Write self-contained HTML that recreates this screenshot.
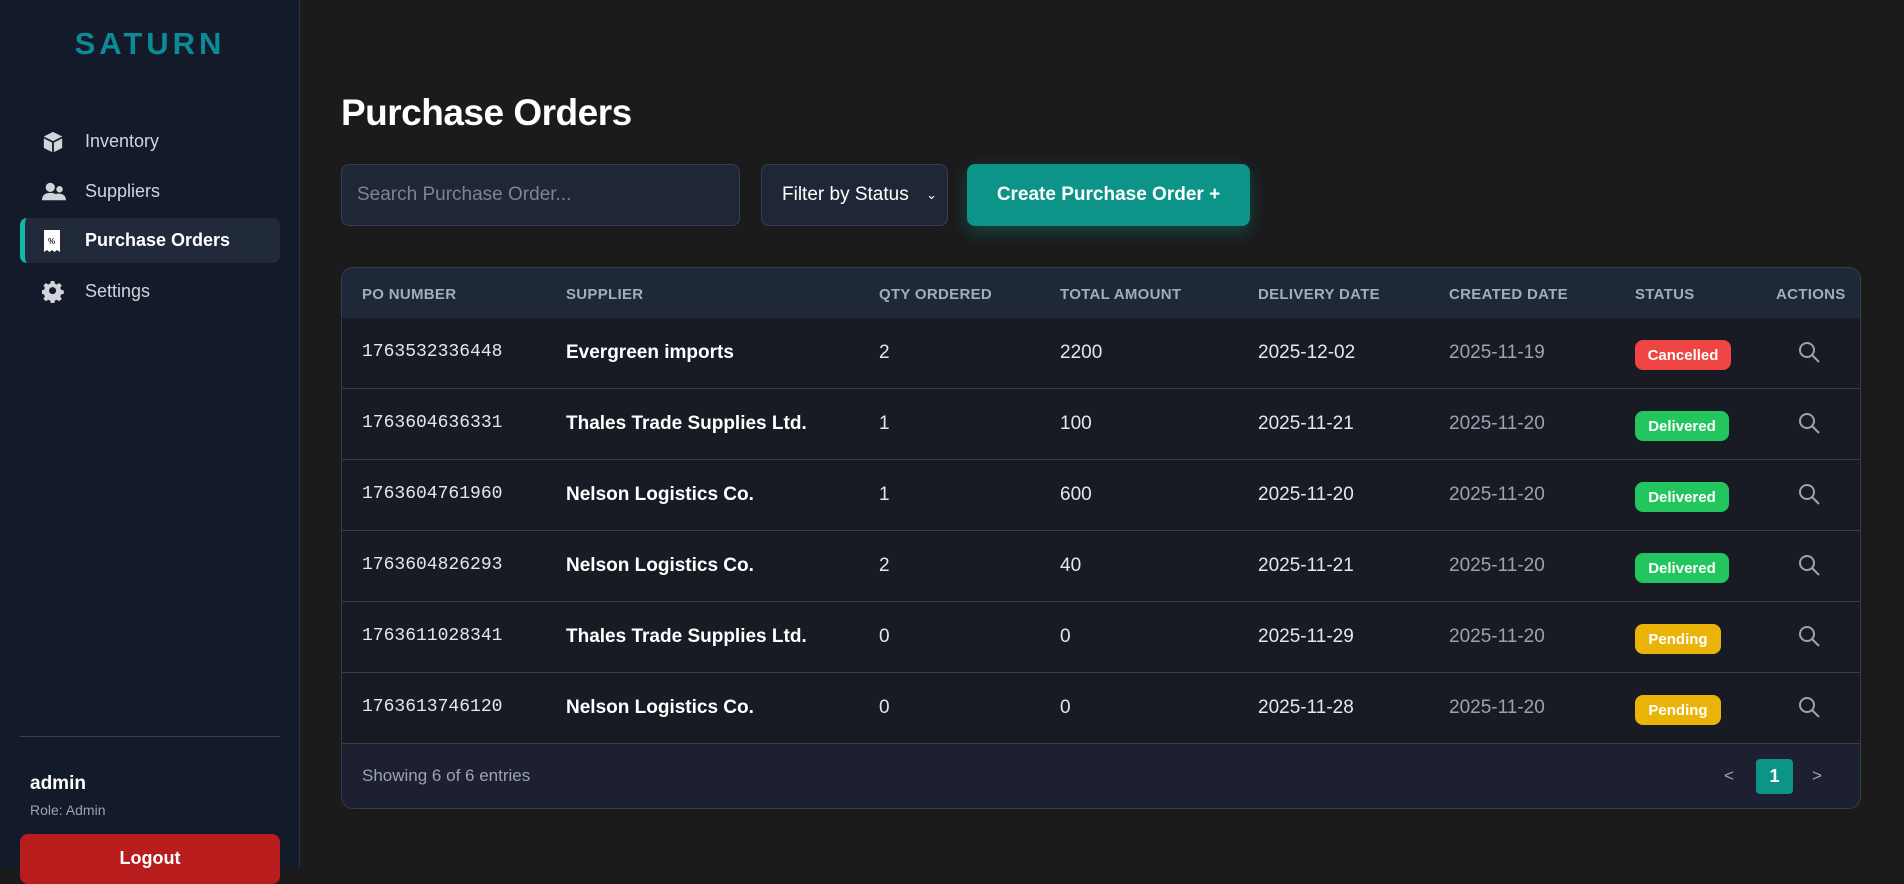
<!DOCTYPE html>
<html><head><meta charset="utf-8"><style>
*{box-sizing:border-box;margin:0;padding:0}
body{width:1904px;height:868px;background:#1b1b1c;font-family:"Liberation Sans",sans-serif;color:#e5e7eb;overflow:hidden;position:relative}
.sb{position:absolute;left:0;top:0;width:300px;height:868px;background:#131a29;border-right:1px solid #2b3242}
.logo{position:absolute;top:26px;left:0;width:300px;text-align:center;font-size:31px;font-weight:bold;color:#0e8a96;letter-spacing:4px}
.nav{position:absolute;left:20px;width:260px;height:45px;display:flex;align-items:center;font-size:18px;color:#d1d5db}
.nav svg{position:absolute;left:22px}
.nav span{position:absolute;left:65px}
.act{background:#212a3a;border-radius:7px;border-left:5px solid #14b8a6;color:#fff;font-weight:bold}
.act svg{left:17px}.act span{left:60px}
h1{position:absolute;left:341px;top:92px;font-size:37px;font-weight:900;color:#fff;letter-spacing:-0.5px}
.in{position:absolute;top:164px;height:62px;background:#1f2737;border:1px solid #363f52;border-radius:8px;font-size:19px;display:flex;align-items:center;white-space:nowrap}
.btn{position:absolute;left:967px;top:164px;width:283px;height:62px;background:#0d9488;border-radius:8px;color:#fff;font-weight:bold;font-size:19px;display:flex;align-items:center;justify-content:center;box-shadow:0 6px 16px rgba(13,148,136,.35)}
.tbl{position:absolute;left:341px;top:267px;width:1520px;height:542px;border:1px solid #343c4d;border-radius:12px;overflow:hidden;background:#181b24}
.hd{height:50px;background:#1f2838;position:relative}
.hd div{position:absolute;top:18px;font-size:15px;font-weight:bold;color:#a3acba;letter-spacing:.3px}
.row{height:71px;border-bottom:1px solid #343c4d;position:relative;font-size:19px}
.row div{position:absolute;top:24px}
.mono{font-family:"Liberation Mono",monospace;font-size:18px;color:#e5e7eb}
.b{font-weight:bold;color:#fff}
.g{color:#9ca3af}
.badge{top:22px!important;height:30px;border-radius:8px;color:#fff;font-size:15px;font-weight:bold;display:flex;align-items:center;justify-content:center}
.ft{height:66px;background:#1c2030;position:relative}
</style></head><body>
<div class="sb">
<div class="logo">SATURN</div>
<div class="nav" style="top:119px"><svg width="22" height="22" viewBox="0 0 24 24" fill="#d1d5db"><path d="M12 1 22 6 12 11 2 6z"/><path d="M2 8l9 4.5V23l-9-4.5z"/><path d="M22 8l-9 4.5V23l9-4.5z"/></svg><span>Inventory</span></div>
<div class="nav" style="top:169px"><svg width="24" height="22" viewBox="0 0 26 22" fill="#d1d5db"><circle cx="9" cy="6" r="5"/><path d="M0 20c0-6 4-8 9-8s9 2 9 8z"/><circle cx="19" cy="8" r="3.5"/><path d="M17 20c0-4-1-6-2-7 6-1 11 1 11 7z"/></svg><span>Suppliers</span></div>
<div class="nav act" style="top:218px"><svg width="20" height="24" viewBox="0 0 20 24"><path d="M2 1h16v22l-3-2-2.5 2-2.5-2-2.5 2-2.5-2-3 2z" fill="#fff"/><text x="6" y="15" font-size="8" fill="#212a3a" font-family="Liberation Sans">%</text></svg><span>Purchase Orders</span></div>
<div class="nav" style="top:269px"><svg width="22" height="22" viewBox="0 0 24 24" fill="#d1d5db"><path d="M10 1h4l.6 3 2.4 1 2.6-1.7 2.8 2.8L20.7 8.7l1 2.4 3 .6v4l-3 .6-1 2.4 1.7 2.6-2.8 2.8-2.6-1.7-2.4 1-.6 3h-4l-.6-3-2.4-1-2.6 1.7-2.8-2.8 1.7-2.6-1-2.4-3-.6v-4l3-.6 1-2.4L1.6 6.1 4.4 3.3 7 5l2.4-1zM12 8a4 4 0 100 8 4 4 0 000-8z" transform="translate(0 -1) scale(.96)"/></svg><span>Settings</span></div>
<div style="position:absolute;left:20px;top:736px;width:260px;height:1px;background:#394253"></div>
<div style="position:absolute;left:30px;top:773px;font-size:19px;font-weight:bold;color:#fff">admin</div>
<div style="position:absolute;left:30px;top:802px;font-size:14px;color:#9ca3af">Role: Admin</div>
<div style="position:absolute;left:20px;top:834px;width:260px;height:50px;background:#b91c1c;border-radius:8px;color:#fff;font-weight:bold;font-size:18px;text-align:center;padding-top:14px">Logout</div>
</div>
<h1>Purchase Orders</h1>
<div class="in" style="left:341px;width:399px;padding-left:15px;color:#7b8494">Search Purchase Order...</div>
<div class="in" style="left:761px;width:187px;padding-left:20px;color:#fff">Filter by Status <span style="position:absolute;right:10px;font-size:13px">&#8964;</span></div>
<div class="btn">Create Purchase Order +</div>
<div class="tbl">
<div class="hd"><div style="left:20px">PO NUMBER</div><div style="left:224px">SUPPLIER</div><div style="left:537px">QTY ORDERED</div><div style="left:718px">TOTAL AMOUNT</div><div style="left:916px">DELIVERY DATE</div><div style="left:1107px">CREATED DATE</div><div style="left:1293px">STATUS</div><div style="left:1434px">ACTIONS</div></div>
<div class="row"><div class="mono" style="left:20px">1763532336448</div><div class="b" style="left:224px">Evergreen imports</div><div style="left:537px">2</div><div style="left:718px">2200</div><div style="left:916px">2025-12-02</div><div class="g" style="left:1107px">2025-11-19</div><div class="badge" style="left:1293px;width:96px;background:#ef4444">Cancelled</div><div style="left:1455px;top:22px"><svg width="24" height="24" viewBox="0 0 24 24" fill="none" stroke="#9ca3af" stroke-width="2"><circle cx="10" cy="10" r="7"/><path d="M15 15l7 7"/></svg></div></div>
<div class="row"><div class="mono" style="left:20px">1763604636331</div><div class="b" style="left:224px">Thales Trade Supplies Ltd.</div><div style="left:537px">1</div><div style="left:718px">100</div><div style="left:916px">2025-11-21</div><div class="g" style="left:1107px">2025-11-20</div><div class="badge" style="left:1293px;width:94px;background:#22c55e">Delivered</div><div style="left:1455px;top:22px"><svg width="24" height="24" viewBox="0 0 24 24" fill="none" stroke="#9ca3af" stroke-width="2"><circle cx="10" cy="10" r="7"/><path d="M15 15l7 7"/></svg></div></div>
<div class="row"><div class="mono" style="left:20px">1763604761960</div><div class="b" style="left:224px">Nelson Logistics Co.</div><div style="left:537px">1</div><div style="left:718px">600</div><div style="left:916px">2025-11-20</div><div class="g" style="left:1107px">2025-11-20</div><div class="badge" style="left:1293px;width:94px;background:#22c55e">Delivered</div><div style="left:1455px;top:22px"><svg width="24" height="24" viewBox="0 0 24 24" fill="none" stroke="#9ca3af" stroke-width="2"><circle cx="10" cy="10" r="7"/><path d="M15 15l7 7"/></svg></div></div>
<div class="row"><div class="mono" style="left:20px">1763604826293</div><div class="b" style="left:224px">Nelson Logistics Co.</div><div style="left:537px">2</div><div style="left:718px">40</div><div style="left:916px">2025-11-21</div><div class="g" style="left:1107px">2025-11-20</div><div class="badge" style="left:1293px;width:94px;background:#22c55e">Delivered</div><div style="left:1455px;top:22px"><svg width="24" height="24" viewBox="0 0 24 24" fill="none" stroke="#9ca3af" stroke-width="2"><circle cx="10" cy="10" r="7"/><path d="M15 15l7 7"/></svg></div></div>
<div class="row"><div class="mono" style="left:20px">1763611028341</div><div class="b" style="left:224px">Thales Trade Supplies Ltd.</div><div style="left:537px">0</div><div style="left:718px">0</div><div style="left:916px">2025-11-29</div><div class="g" style="left:1107px">2025-11-20</div><div class="badge" style="left:1293px;width:86px;background:#eab308">Pending</div><div style="left:1455px;top:22px"><svg width="24" height="24" viewBox="0 0 24 24" fill="none" stroke="#9ca3af" stroke-width="2"><circle cx="10" cy="10" r="7"/><path d="M15 15l7 7"/></svg></div></div>
<div class="row"><div class="mono" style="left:20px">1763613746120</div><div class="b" style="left:224px">Nelson Logistics Co.</div><div style="left:537px">0</div><div style="left:718px">0</div><div style="left:916px">2025-11-28</div><div class="g" style="left:1107px">2025-11-20</div><div class="badge" style="left:1293px;width:86px;background:#eab308">Pending</div><div style="left:1455px;top:22px"><svg width="24" height="24" viewBox="0 0 24 24" fill="none" stroke="#9ca3af" stroke-width="2"><circle cx="10" cy="10" r="7"/><path d="M15 15l7 7"/></svg></div></div>
<div class="ft"><div style="position:absolute;left:20px;top:22px;font-size:17px;color:#9ca3af">Showing 6 of 6 entries</div>
<div style="position:absolute;left:1382px;top:22px;font-size:17px;color:#9ca3af">&lt;</div>
<div style="position:absolute;left:1414px;top:15px;width:37px;height:35px;background:#0d9488;border-radius:4px;color:#fff;font-weight:bold;font-size:18px;text-align:center;line-height:35px">1</div>
<div style="position:absolute;left:1470px;top:22px;font-size:17px;color:#9ca3af">&gt;</div></div>
</div>
</body></html>
